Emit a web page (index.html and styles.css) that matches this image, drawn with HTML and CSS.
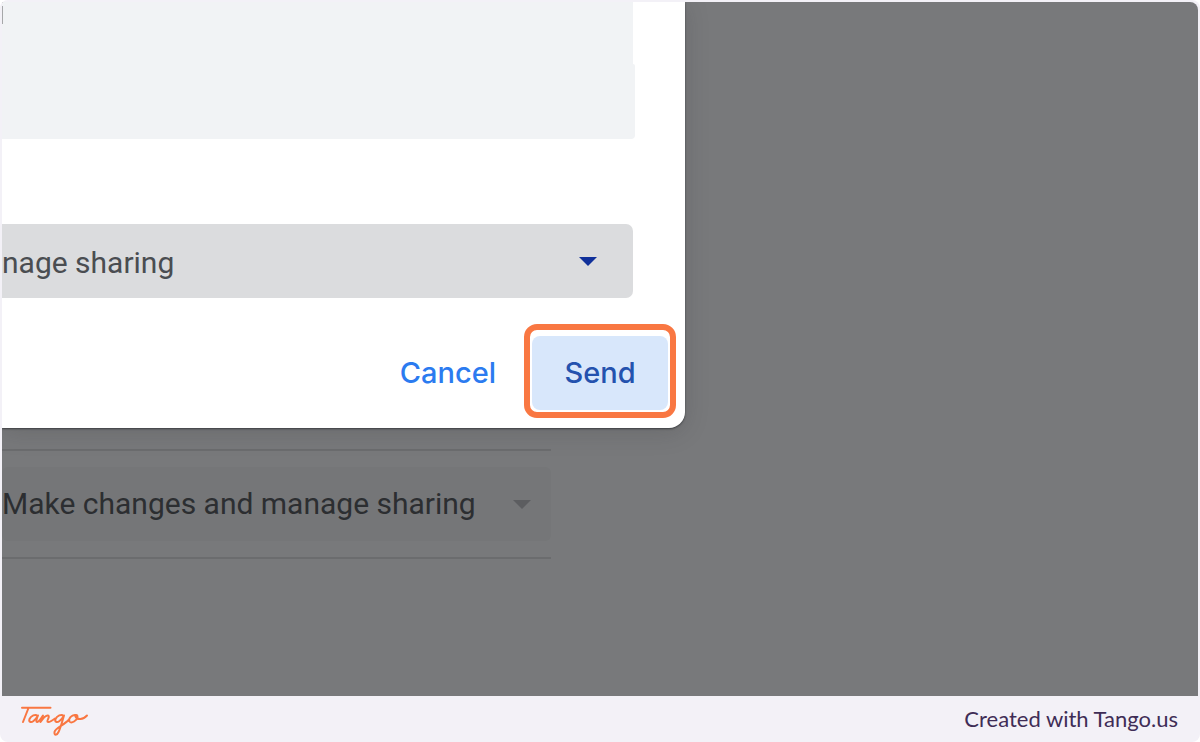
FILE: index.html
```html
<!DOCTYPE html>
<html lang="en">
<head>
<meta charset="utf-8">
<title>Send</title>
<link rel="stylesheet" href="styles.css">
</head>
<body>
<div class="frame">
  <main class="stage">
    <section class="backdrop" aria-label="Shared with">
      <div class="picker picker-dim">
        <select class="picker-select" aria-label="Current role">
          <option>Make changes and manage sharing</option>
        </select>
        <svg class="picker-arrow" viewBox="0 0 18 9" aria-hidden="true"><path d="M0 0H18L9 9Z"/></svg>
      </div>
    </section>
    <section class="dialog" role="dialog" aria-label="Share">
      <div class="notes"><div class="notes-top"><div class="caret"></div></div><div class="notes-bottom"></div></div>
      <div class="picker picker-active">
        <select class="picker-select" aria-label="Role">
          <option>nage sharing</option>
        </select>
        <svg class="picker-arrow" viewBox="0 0 18 9" aria-hidden="true"><path d="M0 0H18L9 9Z"/></svg>
      </div>
      <div class="actions">
        <button class="button button-cancel" type="button">Cancel</button>
        <div class="highlight"><button class="button button-send" type="button">Send</button></div>
      </div>
    </section>
  </main>
  <footer class="footer">
    <svg class="logo" viewBox="0 0 70 34" role="img" aria-label="Tango">
      <path d="M2 5.7H30.500M8.500 6L3 20M17.500 14C15.500 11.500 11 14 9.500 17C8.500 20 11 21 13.500 19C15.500 17.500 17 15.500 18 13.500C17 16 16 18.500 16.500 19.700C17.500 21 20.500 17.500 23 13.500L20.500 20C22.500 17 26 13 28 13.500C30.500 14.500 26.500 18.500 27.500 19.700C29 21 33 18 35 16.500M43.500 14C41.500 11.500 37 14 35.500 17C34.500 20 37 21 39.500 19C41.500 17.500 43 15.500 44 13.500C42 20 40.500 26 38.500 30C37 33.500 34 33.500 34.500 30C35.500 25.500 44 23.500 49 17.500M55.500 13C51.500 12.500 48 17 49.500 19.500C51.500 22 57 18.500 57.500 15C57.500 12 54.500 12.500 55.500 14.500C57 18 63 18 67 13.500"/>
    </svg>
    <span class="credit">Created with Tango.us</span>
  </footer>
</div>
</body>
</html>
```
FILE: styles.css
```css
* { box-sizing: border-box; }
body { margin: 0; background: #fff; }
.frame {
  display: flex;
  flex-direction: column;
  min-height: 100vh;
  padding: 2px 2px 0;
  border-radius: 8px;
  background: #f3f1f7;
}
.stage {
  position: relative;
  flex: 1;
  overflow: hidden;
  border-radius: 2px 8px 0 0;
  background: #78797b;
}
.backdrop {
  width: 549px;
  margin-top: 447px;
  padding: 16px 0;
  border: solid #6b6c6e;
  border-width: 2px 0;
}
.picker { position: relative; height: 74px; }
.picker-select {
  width: 100%;
  height: 100%;
  padding: 0;
  border: 0;
  appearance: none;
  background: none;
  font: 30px/40px Roboto, sans-serif;
}
.picker-arrow { position: absolute; top: 33px; right: 20px; width: 18px; height: 9px; }
.picker-dim { border-radius: 6px; background: #757678; }
.picker-dim .picker-select { color: #2c2e31; }
.picker-dim .picker-arrow { fill: #5c5d60; }
.dialog {
  position: absolute;
  top: 0;
  left: 0;
  width: 683px;
  padding-bottom: 10px;
  border-radius: 0 0 16px 0;
  background: #fff;
  box-shadow: 0 1px 2px #3c3e42, 0 4px 24px rgba(50, 52, 56, 0.2);
}
.notes-top { width: 631px; height: 62px; padding-top: 4px; background: #f1f3f5; }
.caret { width: 1px; height: 18px; background: #a6a7a9; }
.notes-bottom { width: 633px; height: 75px; border-radius: 0 2px 4px 0; background: #f1f3f5; }
.picker-active {
  width: 631px;
  margin-top: 85px;
  border-radius: 0 7px 7px 0;
  background: #dbdcde;
}
.picker-active .picker-select { padding-top: 4px; color: #4a4d51; }
.picker-active .picker-arrow { right: 36px; fill: #10309a; }
.actions {
  display: flex;
  justify-content: flex-end;
  align-items: baseline;
  gap: 28px;
  margin-top: 26px;
  padding-right: 9px;
}
.button {
  padding: 0;
  border: 0;
  background: none;
  font: 500 29px/40px Inter, sans-serif;
}
.button-cancel { color: #2b7bf0; }
.highlight { padding: 6px 2px 2px; border: 6px solid #f97742; border-radius: 13px; }
.button-send {
  display: block;
  width: 136px;
  height: 74px;
  border-radius: 8px;
  background: #d8e7fb;
  color: #2452ae;
}
.footer {
  display: flex;
  align-items: center;
  justify-content: space-between;
  height: 46px;
  padding: 0 20px 0 18px;
}
.logo {
  width: 70px;
  height: 34px;
  fill: none;
  stroke: #f97742;
  stroke-width: 2;
  stroke-linecap: round;
  stroke-linejoin: round;
}
.credit { color: #3f2d56; font: 22px/28px Lato, sans-serif; }
```
